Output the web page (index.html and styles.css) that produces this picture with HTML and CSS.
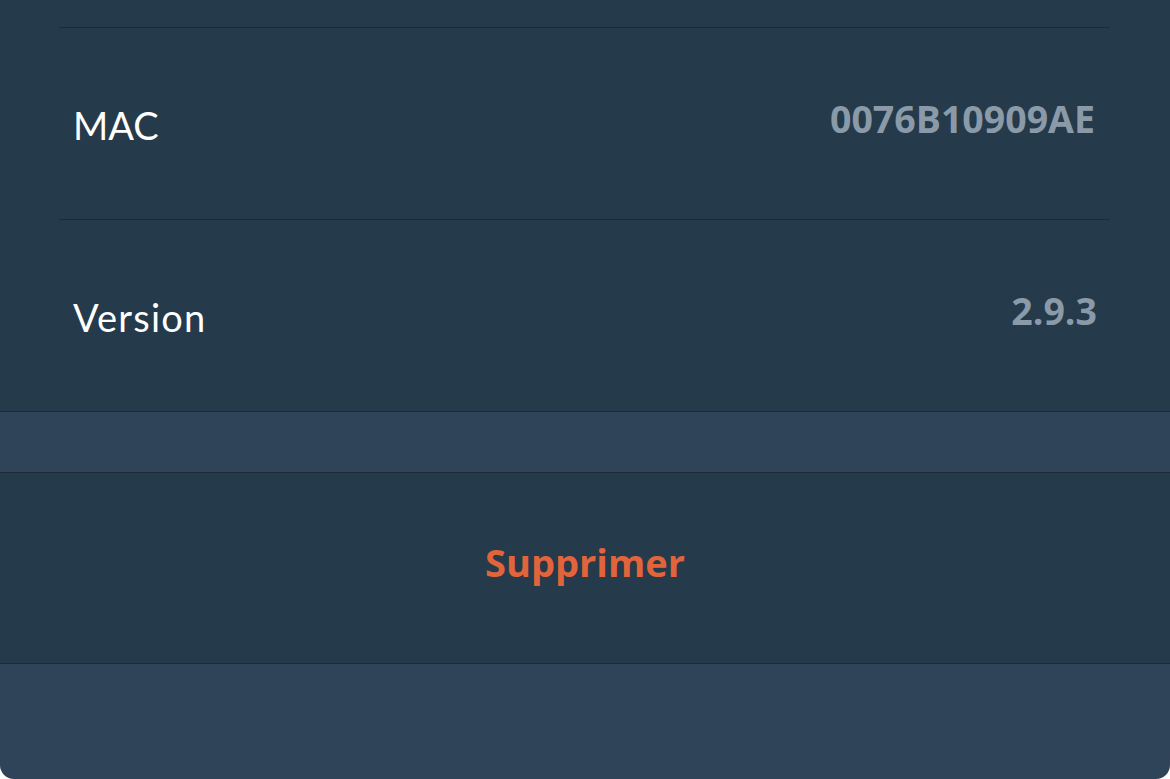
FILE: index.html
```html
<!DOCTYPE html>
<html lang="fr">
<head>
<meta charset="utf-8">
<title>Appareil</title>
<link rel="stylesheet" href="styles.css">
</head>
<body>
<div class="sheet">
  <section class="group">
    <div class="top-spacer"></div>
    <div class="row">
      <span class="label">MAC</span>
      <span class="value">0076B10909AE</span>
    </div>
    <div class="row">
      <span class="label">Version</span>
      <span class="value">2.9.3</span>
    </div>
  </section>
  <div class="gap"></div>
  <button class="danger" type="button"><span class="danger-text">Supprimer</span></button>
  <div class="footer"></div>
</div>
</body>
</html>
```
FILE: styles.css
```css
html, body {
  margin: 0;
  padding: 0;
  background: #ffffff;
}
.sheet {
  width: 1170px;
  height: 779px;
  background: #2f4459;
  border-radius: 0 0 14px 14px;
  overflow: hidden;
  display: flex;
  flex-direction: column;
}
.group {
  background: #253a4a;
  padding-left: 59px;
  padding-right: 60px;
  border-bottom: 1px solid #1c2b37;
}
.top-spacer {
  height: 27px;
}
.row {
  height: 191px;
  border-top: 1px solid #1c2b37;
  display: flex;
  align-items: center;
  justify-content: space-between;
  padding: 0 14px;
}
.label {
  font-family: Lato, "Noto Sans", sans-serif;
  font-size: 38px;
  color: #ffffff;
  margin-top: 3px;
}
.row + .row .label {
  letter-spacing: 1.2px;
}
.value {
  font-family: "Open Sans", "Liberation Sans", sans-serif;
  font-weight: 700;
  font-size: 37.5px;
  color: #8b9aa8;
  margin-top: -10px;
  margin-right: 1px;
}
.row + .row .value {
  margin-right: -1px;
}
.gap {
  height: 60px;
}
.danger {
  height: 192px;
  border: 0;
  border-top: 1px solid #1c2b37;
  border-bottom: 1px solid #1c2b37;
  background: #253a4a;
  color: #e2643a;
  font-family: "Open Sans", "Noto Sans", sans-serif;
  font-weight: 700;
  font-size: 38px;
  padding: 0;
  margin: 0;
  width: 100%;
}
.danger-text {
  position: relative;
  top: -6px;
}
.footer {
  flex: 1;
}
```
